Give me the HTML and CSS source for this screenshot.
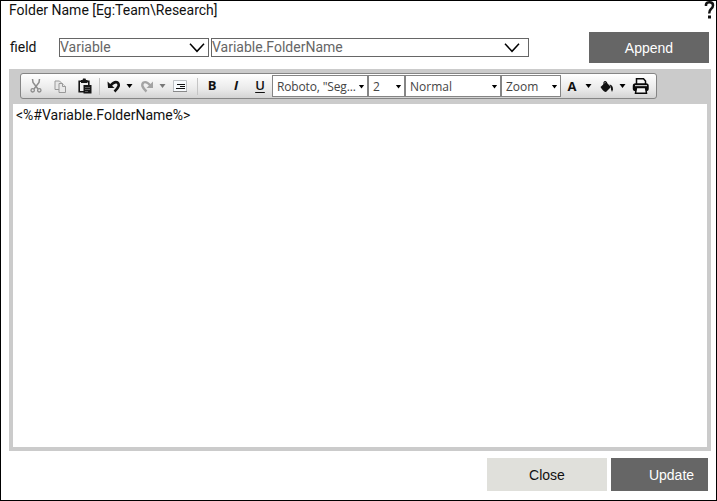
FILE: index.html
```html
<!DOCTYPE html>
<html lang="en">
<head>
<meta charset="utf-8">
<title>Folder Name</title>
<link rel="stylesheet" href="styles.css">
</head>
<body>
<main class="dialog">
  <header class="title-row">
    <span class="title">Folder Name [Eg:Team\Research]</span>
    <svg class="help" width="12" height="20" viewBox="0 0 12 20"><path d="M2 5V3.500Q2.500 1.300 5.500 1.300Q9 1.300 9 4.200Q9 6.500 7 8Q5.200 9.500 5.200 12.500" fill="none" stroke="#111" stroke-width="2.500"/><path d="M4 14.500h3v3H4z" fill="#111"/></svg>
  </header>
  <div class="field-row">
    <label class="field-label">field</label>
    <div class="select select-type"><span>Variable</span><svg width="16" height="10" viewBox="0 0 16 10"><path d="M1 .8 8 8.300 15 .8"/></svg></div>
    <div class="select select-name"><span>Variable.FolderName</span><svg width="16" height="10" viewBox="0 0 16 10"><path d="M1 .8 8 8.300 15 .8"/></svg></div>
    <button class="btn btn-dark append">Append</button>
  </div>
  <section class="editor">
    <div class="toolbar">
      <span class="tool"><svg width="12" height="14" viewBox="0 0 12 14" fill="none" stroke="#8d8d8d"><path d="M2.500 0 3 3.500 8 10M9.500 0 9 3.500 4 10" stroke-width="1.500"/><circle cx="2.700" cy="11.300" r="1.700" stroke-width="1.300"/><circle cx="9.300" cy="11.300" r="1.700" stroke-width="1.300"/></svg></span>
      <span class="tool tool-copy"><svg width="13" height="13" viewBox="0 0 13 13" fill="#e8e8e8" stroke="#999"><path d="M1 1h4.500L8 3.500V9.500H1z"/><path d="M5 3.500h3.500l3 3v6H5z"/><path d="M8.500 3.500v3h3"/></svg></span>
      <span class="tool"><svg width="14" height="16" viewBox="0 0 14 16"><path d="M1.200 3.200h9.600v10.600H1.200z" fill="#eee" stroke="#151515" stroke-width="1.600"/><path d="M3 2h1.500L5 .5h2.500L8 2h1.500v3H3z" fill="#151515"/><path d="M5.500 7H13.500v8.500h-8z" fill="#151515"/><path d="M7 9.500h5M7 11.500h5M7 13.500h3" stroke="#777" stroke-width=".7"/></svg></span>
      <i class="separator sep-first"></i>
      <span class="tool"><svg width="14" height="13" viewBox="0 0 14 13"><path d="M3.500 5.500Q7.500 1 10.500 2.500Q14 5.500 7.500 11.500" fill="none" stroke="#111" stroke-width="2.600"/><path d="M.5 1.500 1 8h6.500z" fill="#111"/></svg></span>
      <i class="arrow"></i>
      <span class="tool tool-redo"><svg width="14" height="13" viewBox="0 0 14 13"><path d="M10.500 5.500Q6.500 1 3.500 2.500Q0 5.500 6.500 11.500" fill="none" stroke="#a3a3a3" stroke-width="2.400"/><path d="M13 1.500V8H6.500z" fill="#a3a3a3"/></svg></span>
      <i class="arrow arrow-muted"></i>
      <span class="tool tool-format"><svg width="14" height="12" viewBox="0 0 14 12"><path d="M.5.500h13v11H.5z" fill="#f7fafd" stroke="#bcc0c4"/><path d="M4 4.500h8M7 6.500h5M3 8.500h9" stroke="#111"/><path d="M0 11.500h14" stroke="#888"/></svg></span>
      <i class="separator sep-format"></i>
      <span class="tool letter bold">B</span>
      <span class="tool letter italic">I</span>
      <span class="tool letter underline">U</span>
      <div class="combo font"><span>Roboto, "Seg...</span><i class="arrow"></i></div>
      <div class="combo size"><span>2</span><i class="arrow"></i></div>
      <div class="combo style"><span>Normal</span><i class="arrow"></i></div>
      <div class="combo zoom"><span>Zoom</span><i class="arrow"></i></div>
      <span class="tool letter color">A</span>
      <i class="arrow arrow-color"></i>
      <span class="tool tool-fill"><svg width="14" height="13" viewBox="0 0 14 13"><path d="M.5 7 6 2l5 5-5 5Q3.500 12 .5 7z" fill="#111"/><path d="M4 5V2.500Q5 .5 6.500 2.500V6" fill="none" stroke="#111" stroke-width="1.200"/><path d="M9.500 4.500Q13 5 13 9.500L12 12l-1-2.500Q11.500 7 9.500 4.500z" fill="#111"/></svg></span>
      <i class="arrow"></i>
      <span class="tool tool-print"><svg width="18" height="16" viewBox="0 0 18 16" fill="#f5f5f5" stroke="#080808" stroke-width="1.500"><path d="M4.500 6V.8h7L13.500 3v3"/><rect x="1.500" y="6" width="14.500" height="6.500" rx="2" fill="#080808"/><path d="M3 7.700h12" stroke="#eee" stroke-width="1"/><path d="M4.500 9.500h9l1 5.700h-11z"/></svg></span>
    </div>
    <div class="content">&lt;%#Variable.FolderName%&gt;</div>
  </section>
  <footer class="actions">
    <button class="btn btn-light">Close</button>
    <button class="btn btn-dark update">Update</button>
  </footer>
</main>
</body>
</html>
```
FILE: styles.css
```css
* { box-sizing: border-box; }
body { margin: 0; background: #fff; font-family: Roboto, "Liberation Sans", sans-serif; color: #111; }
.dialog { width: 717px; height: 501px; border: 1px solid #000; overflow: hidden; }
.title-row { display: flex; justify-content: space-between; height: 31px; padding: 0 0 0 8px; }
.title { font-size: 14px; line-height: 19px; }
.help { display: block; }
.field-row { display: flex; height: 37px; padding: 0 7px 0 9px; }
.field-label { width: 49px; font-size: 14px; line-height: 31px; }
.select { display: flex; justify-content: space-between; height: 19px; margin-top: 6px; border: 1px solid #666; color: #666; font-size: 14px; line-height: 17px; }
.select svg { margin-top: 4px; fill: none; stroke: #000; stroke-width: 1.5; }
.select-type { width: 150px; padding-right: 3px; }
.select-name { width: 318px; margin-left: 2px; padding-right: 8px; }
.btn { border: 0; padding: 0; font: 14px "Liberation Sans", sans-serif; }
.btn-dark { background: #666; color: #fff; }
.btn-light { width: 120px; background: #e0e0db; color: #111; }
.append { width: 120px; height: 31px; margin-left: auto; }
.editor { display: flex; flex-direction: column; width: 702px; height: 382px; margin-left: 8px; padding: 4px; background: #cbcbcb; }
.toolbar { display: flex; align-items: center; width: 637px; height: 26px; margin: 0 0 5px 7px; padding-left: 3px; border: 1px solid #858585; border-radius: 3px; background: linear-gradient(#fff, #e9e9e9 65%, #d4d4d4); }
.tool { display: flex; flex: none; align-items: center; justify-content: center; width: 24px; height: 24px; }
.tool svg { display: block; }
.tool-copy { width: 25px; }
.separator { width: 1px; height: 17px; background: #c5c5c5; }
.sep-first { margin: 0 2px; }
.arrow { flex: none; width: 7px; height: 4px; background: #000; clip-path: polygon(7% 0, 93% 0, 50% 100%); }
.arrow-muted { background: #777; }
.tool-redo { margin-left: 2px; }
.tool-format { margin-left: 2px; }
.sep-format { margin: 0 2px 0 5px; }
.letter { padding-bottom: 2px; font: bold 13px/22px "Open Sans", sans-serif; color: #111; }
.italic { font-style: italic; }
.underline { font-weight: 600; text-decoration: underline; text-decoration-thickness: 1px; text-underline-offset: 2px; }
.combo { display: flex; flex: none; align-items: center; justify-content: space-between; height: 22px; padding: 1px 2px 0 4px; border: 1px solid #858585; background: #fff; color: #444; font: 12px/20px "Open Sans", sans-serif; white-space: nowrap; }
.font { width: 96px; }
.font span { letter-spacing: -.15px; }
.size { width: 37px; }
.style { width: 96px; }
.zoom { width: 60px; }
.color { width: 22px; padding-bottom: 0; }
.arrow-color { margin-left: 2px; }
.tool-fill { margin-left: 3px; }
.tool-print { margin-left: 3px; }
.content { flex: 1; padding: 2px 3px; background: #fff; font-size: 14px; line-height: 18px; }
.actions { display: flex; justify-content: flex-end; gap: 4px; height: 33px; margin: 7px 8px 0 0; }
.update { width: 97px; padding-left: 24px; }
```
